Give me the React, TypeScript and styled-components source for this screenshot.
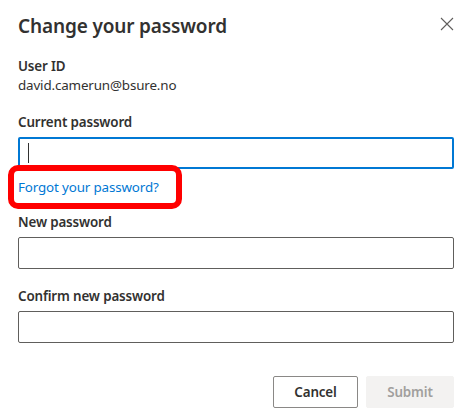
import styled, { createGlobalStyle } from 'styled-components'

const GlobalStyle = createGlobalStyle`
  html, body {
    margin: 0;
    padding: 0;
    background: #fff;
  }
  body {
    font-family: "Noto Sans", "Open Sans", sans-serif;
    color: #323130;
  }
`;

const CloseIcon = () => (
  <svg width="14" height="14" viewBox="0 0 14 14">
    <path d="M1 1 L13 13 M13 1 L1 13" stroke="#605e5c" strokeWidth="1.1" fill="none" />
  </svg>
);

const App = () => {
  return (
    <>
      <GlobalStyle />
      <Dialog>
        <Header>
          <Title>Change your password</Title>
          <CloseButton aria-label="Close">
            <CloseIcon />
          </CloseButton>
        </Header>

        <Body>
          <UserInfo>
            <UserLabel>User ID</UserLabel>
            <UserValue>david.camerun@bsure.no</UserValue>
          </UserInfo>

          <FieldGroup>
            <Label>Current password</Label>
            <Field $focused>
              <Caret />
              <Input type="password" readOnly />
            </Field>
          </FieldGroup>

          <LinkRow>
            <ForgotLink href="#">
              Forgot your password?
              <Highlight />
            </ForgotLink>
          </LinkRow>

          <FieldGroup>
            <Label>New password</Label>
            <Field>
              <Input type="password" readOnly />
            </Field>
          </FieldGroup>

          <FieldGroup $gap={12}>
            <Label>Confirm new password</Label>
            <Field>
              <Input type="password" readOnly />
            </Field>
          </FieldGroup>
        </Body>

        <Footer>
          <Button $width={85}>Cancel</Button>
          <Button $width={88} $disabled disabled>Submit</Button>
        </Footer>
      </Dialog>
    </>
  )
}

const Dialog = styled.div`
  width: 471px;
  height: 419px;
  box-sizing: border-box;
  padding: 12px 17px 0 18px;
  display: flex;
  flex-direction: column;
`;

const Header = styled.div`
  display: flex;
  align-items: flex-start;
  justify-content: space-between;
`;

const Title = styled.h1`
  margin: 0;
  font-size: 19px;
  letter-spacing: -0.15px;
  line-height: 28px;
  font-weight: 600;
  color: #323130;
`;

const CloseButton = styled.button`
  border: none;
  background: none;
  padding: 0;
  margin-top: 5px;
  width: 14px;
  height: 14px;
  display: flex;
  cursor: pointer;
`;

const Body = styled.div`
  display: flex;
  flex-direction: column;
  margin-top: 16px;
`;

const UserInfo = styled.div`
  display: flex;
  flex-direction: column;
  margin-bottom: 13px;
`;

const text = `
  font-size: 13.4px;
  letter-spacing: -0.15px;
`;

const UserLabel = styled.div`
  ${text}
  line-height: 20px;
  font-weight: 600;
`;

const UserValue = styled.div`
  ${text}
  line-height: 18px;
`;

const FieldGroup = styled.div<{ $gap?: number }>`
  display: flex;
  flex-direction: column;
  margin-top: ${p => p.$gap ?? 0}px;
`;

const Label = styled.label`
  ${text}
  line-height: 20px;
  font-weight: 600;
  padding: 5px 0;
`;

const Field = styled.div<{ $focused?: boolean }>`
  height: 32px;
  box-sizing: border-box;
  display: flex;
  align-items: center;
  padding: 0 8px;
  border: 1px solid #605e5c;
  border-radius: 2px;
  background: #fff;

  ${p => p.$focused && `
    border: 2px solid #0078d4;
    padding: 0 7px 0 8px;
  `}
`;

const Caret = styled.span`
  width: 1px;
  height: 20px;
  background: #323130;
`;

const Input = styled.input`
  flex: 1;
  min-width: 0;
  border: none;
  outline: none;
  background: transparent;
  font: inherit;
  font-size: 14px;
  padding: 0;
`;

const LinkRow = styled.div`
  display: flex;
  margin: 8px 0 10px;
`;

const ForgotLink = styled.a`
  position: relative;
  ${text}
  line-height: 20px;
  color: #0078d4;
  text-decoration: none;
`;

const Highlight = styled.span`
  position: absolute;
  left: -10px;
  top: -12px;
  width: 174px;
  height: 44px;
  box-sizing: border-box;
  border: 6px solid #f00;
  border-radius: 10px;
  pointer-events: none;
`;

const Footer = styled.div`
  display: flex;
  justify-content: flex-end;
  gap: 8px;
  margin-top: 33px;
`;

const Button = styled.button<{ $width: number; $disabled?: boolean }>`
  width: ${p => p.$width}px;
  height: 32px;
  box-sizing: border-box;
  border-radius: 2px;
  font-family: inherit;
  ${text}
  font-weight: 600;
  border: 1px solid ${p => (p.$disabled ? '#f3f2f1' : '#8a8886')};
  background: ${p => (p.$disabled ? '#f3f2f1' : '#fff')};
  color: ${p => (p.$disabled ? '#a19f9d' : '#323130')};
  cursor: ${p => (p.$disabled ? 'default' : 'pointer')};
`;

export default App
